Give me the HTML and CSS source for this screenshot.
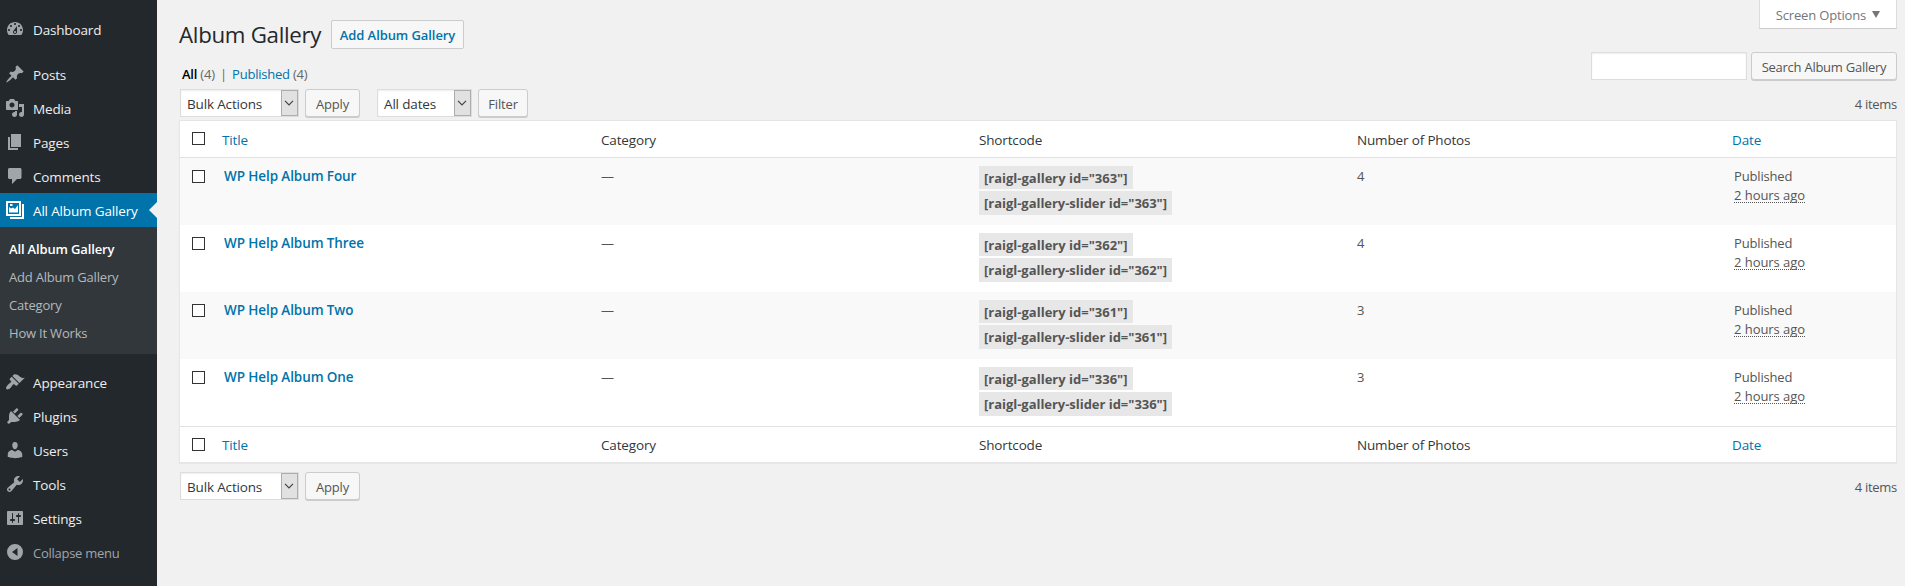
FILE: index.html
```html
<!DOCTYPE html>
<html lang="en">
<head>
<meta charset="utf-8">
<title>Album Gallery</title>
<link rel="stylesheet" href="styles.css">
</head>
<body>
<div class="admin">
  <nav class="sidebar">
    <a class="item upper"><svg class="icon" viewBox="0 0 20 20"><path d="M3.76 16h12.48c1.1-1.37 1.76-3.11 1.76-5 0-4.42-3.58-8-8-8s-8 3.58-8 8c0 1.89.66 3.63 1.76 5zM10 4c.55 0 1 .45 1 1s-.45 1-1 1-1-.45-1-1 .45-1 1-1zM6 6c.55 0 1 .45 1 1s-.45 1-1 1-1-.45-1-1 .45-1 1-1zm8 0c.55 0 1 .45 1 1s-.45 1-1 1-1-.45-1-1 .45-1 1-1zm-5.37 5.55L12 7v6c0 1.1-.9 2-2 2s-2-.9-2-2c0-.57.24-1.08.63-1.45zM4 10c.55 0 1 .45 1 1s-.45 1-1 1-1-.45-1-1 .45-1 1-1zm12 0c.55 0 1 .45 1 1s-.45 1-1 1-1-.45-1-1 .45-1 1-1zm-5 3c0-.55-.45-1-1-1s-1 .45-1 1 .45 1 1 1 1-.45 1-1z"/></svg>Dashboard</a>
    <div class="separator"></div>
    <a class="item upper"><svg class="icon" viewBox="0 0 20 20"><path d="M10.44 3.02l1.82-1.82 6.36 6.35-1.83 1.82c-1.05-.68-2.48-.57-3.41.36l-.75.75c-.92.93-1.04 2.35-.35 3.41l-1.83 1.82-2.41-2.41-2.8 2.79c-.42.42-3.38 2.71-3.8 2.29s1.86-3.39 2.28-3.81l2.79-2.79L4.1 9.36l1.83-1.82c1.05.69 2.48.57 3.4-.36l.75-.75c.93-.92 1.05-2.35.36-3.41z"/></svg>Posts</a>
    <a class="item upper"><svg class="icon" viewBox="0 0 20 20"><path d="M13 11V4c0-.55-.45-1-1-1h-1.67L9 1H5L3.67 3H2c-.55 0-1 .45-1 1v7c0 .55.45 1 1 1h10c.55 0 1-.45 1-1zM7 4.5c1.38 0 2.5 1.12 2.5 2.5S8.38 9.5 7 9.5 4.5 8.38 4.5 7 5.62 4.5 7 4.5zM14 6h5v10.5c0 1.38-1.12 2.5-2.5 2.5S14 17.88 14 16.5s1.12-2.5 2.5-2.5c.17 0 .34.02.5.05V9h-3V6zm-4 8.05V13h2v3.5c0 1.38-1.12 2.5-2.5 2.5S7 17.88 7 16.5 8.12 14 9.5 14c.17 0 .34.02.5.05z"/></svg>Media</a>
    <a class="item upper"><svg class="icon" viewBox="0 0 20 20"><path d="M6 15V2h10v13H6zm-1 1h8v2H3V5h2v11z"/></svg>Pages</a>
    <a class="item upper"><svg class="icon" viewBox="0 0 20 20"><path d="M4.500 2h10.500c.8 0 1.500.7 1.500 1.500v8c0 .8-.7 1.500-1.500 1.500h-3l-5 5v-5H4.500c-.8 0-1.500-.7-1.500-1.500v-8C3 2.700 3.700 2 4.500 2z"/></svg>Comments</a>
    <a class="item upper active"><svg class="icon" viewBox="0 0 20 20"><path fill-rule="evenodd" d="M1 1h15v15H1zM3 3v11h11V3z"/><path d="M4 12.500V7l2 1.500 2-1 2 1.500 3-4v7.500zM5 4h2.500v2H5zM17 4h2v15H5v-2h12z"/></svg>All Album Gallery</a>
    <div class="submenu">
      <a class="current">All Album Gallery</a>
      <a>Add Album Gallery</a>
      <a>Category</a>
      <a>How It Works</a>
    </div>
    <div class="separator last"></div>
    <a class="item"><svg class="icon" viewBox="0 0 20 20"><path d="M14.480 11.060L7.410 3.990l1.500-1.500c.5-.56 2.300-.47 3.510.32 1.210.8 1.430 1.280 2.910 2.100 1.180.64 2.450 1.260 4.450.85zm-.71.71L6.700 4.700 4.930 6.470c-.39.39-.39 1.020 0 1.410l1.060 1.060c.39.39.39 1.030 0 1.420-.6.6-1.430 1.110-2.210 1.690-.35.26-.7.53-1.010.84C1.430 14.230.4 16.080 1.400 17.070c.99 1 2.840-.03 4.180-1.360.31-.31.58-.66.85-1.020.57-.78 1.080-1.610 1.690-2.210.39-.39 1.020-.39 1.410 0l1.060 1.060c.39.39 1.020.39 1.410 0z"/></svg>Appearance</a>
    <a class="item"><svg class="icon" viewBox="0 0 20 20"><path d="M13.110 4.360L9.870 7.600 8 5.730l3.240-3.240c.35-.34 1.050-.2 1.560.32.52.51.66 1.210.31 1.550zm-8 1.770l.91-1.120 9.010 9.010-1.190.84c-.71.71-2.630 1.160-3.820 1.160H6.140L4.900 17.260c-.59.59-1.540.59-2.120 0-.59-.58-.59-1.530 0-2.120l1.240-1.240v-3.880c0-1.130.4-3.190 1.090-3.890zm7.260 3.970l3.240-3.240c.34-.35 1.040-.21 1.550.31.52.51.66 1.210.31 1.550l-3.240 3.250z"/></svg>Plugins</a>
    <a class="item"><svg class="icon" viewBox="0 0 20 20"><path d="M10 9.250c-2.270 0-2.730-3.440-2.730-3.440C7 4.020 7.820 2 9.970 2c2.160 0 2.980 2.020 2.710 3.810 0 0-.41 3.440-2.680 3.440zm0 2.570L12.720 10c2.390 0 4.520 2.330 4.520 4.530v2.490s-3.650 1.130-7.240 1.130c-3.650 0-7.240-1.130-7.240-1.130v-2.490c0-2.250 1.940-4.480 4.470-4.480z"/></svg>Users</a>
    <a class="item"><svg class="icon" viewBox="0 0 20 20"><path d="M16.680 9.770c-1.340 1.340-3.300 1.670-4.950.99l-5.410 6.520c-.99.99-2.590.99-3.580 0s-.99-2.590 0-3.570l6.520-5.420c-.68-1.650-.35-3.610.99-4.950 1.280-1.280 3.120-1.620 4.720-1.060l-2.890 2.890 2.820 2.820 2.860-2.870c.53 1.580.18 3.390-1.080 4.650zM3.810 16.210c.4.39 1.040.39 1.430 0 .4-.4.4-1.040 0-1.430-.39-.4-1.030-.4-1.430 0-.39.39-.39 1.030 0 1.430z"/></svg>Tools</a>
    <a class="item"><svg class="icon" viewBox="0 0 20 20"><path d="M18 16V4c0-.55-.45-1-1-1H3c-.55 0-1 .45-1 1v12c0 .55.45 1 1 1h14c.55 0 1-.45 1-1zM8 11h1c.55 0 1 .45 1 1s-.45 1-1 1H8v1.500c0 .28-.22.5-.5.5s-.5-.22-.5-.5V13H6c-.55 0-1-.45-1-1s.45-1 1-1h1V5.500c0-.28.22-.5.5-.5s.5.22.5.5V11zm5-2h-1c-.55 0-1-.45-1-1s.45-1 1-1h1V5.500c0-.28.22-.5.5-.5s.5.22.5.5V7h1c.55 0 1 .45 1 1s-.45 1-1 1h-1v5.500c0 .28-.22.5-.5.5s-.5-.22-.5-.5V9z"/></svg>Settings</a>
    <a class="item collapse"><svg class="icon" viewBox="0 0 20 20"><path fill-rule="evenodd" d="M10 2a8 8 0 1 1 0 16 8 8 0 0 1 0-16zM12.500 6L7 10l5.500 4z"/></svg>Collapse menu</a>
  </nav>

  <main class="content">
    <header class="top">
      <h1>Album Gallery</h1>
      <a class="add">Add Album Gallery</a>
      <button class="screen-options">Screen Options <svg viewBox="0 0 8 7"><path d="M0 0h8L4 7z"/></svg></button>
    </header>
    <div class="filters">
      <p class="views"><b>All</b> (4) <i>|</i> <a>Published</a> (4)</p>
      <div class="search"><input type="text" aria-label="Search"><button class="button">Search Album Gallery</button></div>
    </div>
    <div class="tablenav">
      <div class="select bulk">Bulk Actions<span><svg viewBox="0 0 10 6"><path d="M1 .8l4 4 4-4"/></svg></span></div>
      <button class="button apply">Apply</button>
      <div class="select dates">All dates<span><svg viewBox="0 0 10 6"><path d="M1 .8l4 4 4-4"/></svg></span></div>
      <button class="button filter">Filter</button>
      <span class="count">4 items</span>
    </div>

    <section class="table">
      <div class="row head"><input type="checkbox"><a>Title</a><span>Category</span><span>Shortcode</span><span>Number of Photos</span><a>Date</a></div>
      <div class="row odd"><input type="checkbox"><a class="title">WP Help Album Four</a><span>—</span><div class="codes"><b>[raigl-gallery id="363"]</b><b>[raigl-gallery-slider id="363"]</b></div><span>4</span><div class="date">Published<br><abbr>2 hours ago</abbr></div></div>
      <div class="row"><input type="checkbox"><a class="title">WP Help Album Three</a><span>—</span><div class="codes"><b>[raigl-gallery id="362"]</b><b>[raigl-gallery-slider id="362"]</b></div><span>4</span><div class="date">Published<br><abbr>2 hours ago</abbr></div></div>
      <div class="row odd"><input type="checkbox"><a class="title">WP Help Album Two</a><span>—</span><div class="codes"><b>[raigl-gallery id="361"]</b><b>[raigl-gallery-slider id="361"]</b></div><span>3</span><div class="date">Published<br><abbr>2 hours ago</abbr></div></div>
      <div class="row"><input type="checkbox"><a class="title">WP Help Album One</a><span>—</span><div class="codes"><b>[raigl-gallery id="336"]</b><b>[raigl-gallery-slider id="336"]</b></div><span>3</span><div class="date">Published<br><abbr>2 hours ago</abbr></div></div>
      <div class="row head foot"><input type="checkbox"><a>Title</a><span>Category</span><span>Shortcode</span><span>Number of Photos</span><a>Date</a></div>
    </section>

    <div class="tablenav bottom">
      <div class="select bulk">Bulk Actions<span><svg viewBox="0 0 10 6"><path d="M1 .8l4 4 4-4"/></svg></span></div>
      <button class="button apply">Apply</button>
      <span class="count">4 items</span>
    </div>
  </main>
</div>
</body>
</html>
```

FILE: styles.css
```css
* { box-sizing: border-box; }
body {
  margin: 0;
  background: #f1f1f1;
  color: #555;
  font: 13px/19px "Open Sans", "Noto Sans", sans-serif;
  letter-spacing: -0.16px;
  overflow: hidden;
}
a { color: #0073aa; }
button, input { font: inherit; letter-spacing: inherit; margin: 0; }
.admin { display: flex; height: 586px; }

/* Sidebar */
.sidebar { width: 157px; flex: none; background: #23282d; padding-top: 12px; }
.item {
  display: flex; align-items: center; position: relative;
  height: 34px; padding: 1px 0 0 5px; gap: 8px;
  color: #eee; font-size: 13.5px; white-space: nowrap;
}
.icon { width: 20px; height: 20px; flex: none; fill: #a0a5aa; margin-top: -3px; }
.upper { padding-top: 3px; }
.separator { height: 11px; }
.separator.last { height: 12px; }
.active { background: #0073aa; color: #fff; }
.active .icon { fill: #fff; }
.active::after {
  content: ""; position: absolute; right: 0; top: 9px;
  border: 8px solid transparent; border-right-color: #f1f1f1; border-left: 0;
}
.submenu { background: #32373c; height: 127px; padding: 8px 0 0 9px; }
.submenu a { display: block; height: 28px; line-height: 28px; color: #b4b9be; letter-spacing: -0.2px; }
.submenu .current { color: #fff; font-weight: 600; letter-spacing: -0.15px; }
.collapse { color: #a0a5aa; font-size: 13px; letter-spacing: -0.26px; }

/* Page header */
.content { flex: 1; padding: 0 8px 0 23px; }
.top { display: flex; align-items: flex-start; height: 52px; }
h1 {
  margin: 20px 9px 0 -1px; width: 143px; white-space: nowrap;
  font-size: 22.3px; font-weight: 400; line-height: 30px; color: #23282d; letter-spacing: -0.3px;
}
.add {
  margin-top: 20px; height: 29px; width: 133px; border: 1px solid #ccc; border-radius: 2px;
  background: #f7f7f7; text-align: center; font-weight: 600; line-height: 29px; letter-spacing: -0.08px;
}
.screen-options {
  margin-left: auto; width: 138px; height: 29px; padding: 3px 0 0;
  border: 1px solid #ddd; border-top: 0; border-bottom-color: #ccc; background: #fff; color: #72777c;
}
.screen-options svg { width: 8px; height: 7px; fill: #72777c; margin-left: 3px; vertical-align: 2px; }

.filters { display: flex; justify-content: space-between; height: 37px; }
.views { margin: 13px 0 0 2px; color: #666; letter-spacing: -0.22px; }
.views b { color: #000; font-weight: 600; }
.views i { font-style: normal; margin: 0 2px; }
.search { display: flex; gap: 4px; }
.search input { width: 156px; height: 28px; border: 1px solid #ddd; box-shadow: inset 0 1px 2px rgba(0,0,0,.07); }
.button {
  height: 28px; border: 1px solid #ccc; border-radius: 3px; padding: 2px 0 0;
  background: #f7f7f7; color: #555; box-shadow: 0 1px 0 #ccc;
}
.search .button { width: 146px; letter-spacing: -0.25px; }

/* Bulk actions */
.tablenav { display: flex; height: 31px; }
.select {
  display: flex; justify-content: space-between; height: 28px; padding-left: 6px;
  border: 1px solid #ddd; background: #fff; color: #32373c;
  font-size: 13.5px; line-height: 29px; box-shadow: inset 0 1px 2px rgba(0,0,0,.07);
}
.select span {
  display: flex; align-items: center; justify-content: center;
  width: 17px; padding-right: 1px; border: 1px solid #adadad; background: #e1e1e1;
}
.select svg { width: 10px; height: 6px; fill: none; stroke: #444; stroke-width: 1.2; }
.bulk { width: 119px; }
.apply { width: 55px; margin-left: 6px; }
.dates { width: 95px; margin-left: 17px; }
.filter { width: 50px; margin-left: 6px; }
.count { margin: 6px 0 0 auto; letter-spacing: -0.3px; }

/* Album list */
.table { border: 1px solid #e5e5e5; margin-left: -1px; background: #fff; box-shadow: 0 1px 1px rgba(0,0,0,.04); }
.row {
  display: grid; grid-template-columns: 30px 379px 378px 378px 375px 1fr;
  height: 67px; padding: 9px 0 0 12px;
}
.odd { background: #f9f9f9; }
.head { height: 37px; padding-top: 10px; border-bottom: 1px solid #e1e1e1; font-size: 13.5px; color: #32373c; }
.foot { height: 36px; padding-top: 9px; border: 0; border-top: 1px solid #e1e1e1; }
.row input {
  appearance: none; width: 13px; height: 13px; margin-top: 3px;
  border: 1px solid #333; background: #fff;
}
.head input { margin-top: 1px; }
.foot input { margin-top: 2px; }
.title { font-size: 13.5px; font-weight: 600; padding-left: 2px; letter-spacing: -0.1px; }
.codes { display: flex; flex-direction: column; align-items: flex-start; gap: 2px; margin-top: -1px; }
.codes b { height: 23px; padding: 0 5px; background: #e7e7e7; color: #555; line-height: 25px; letter-spacing: 0; }
.codes b + b { height: 24px; letter-spacing: -0.03px; }
.date { padding-left: 2px; }
abbr { border-bottom: 1px dotted #555; display: inline-block; line-height: 19px; height: 17px; letter-spacing: -0.05px; }

.bottom { margin-top: 9px; }
```
